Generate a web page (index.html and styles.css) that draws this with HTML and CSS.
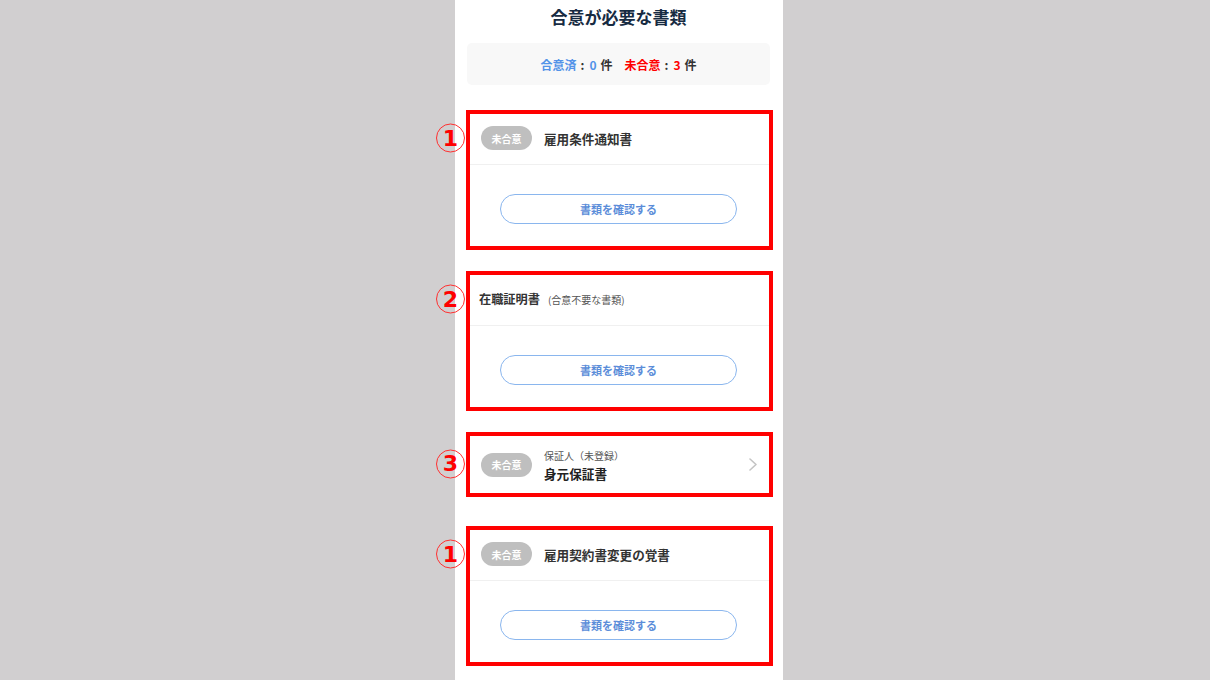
FILE: index.html
```html
<!DOCTYPE html>
<html lang="ja">
<head>
<meta charset="utf-8">
<title>合意が必要な書類</title>
<link rel="stylesheet" href="styles.css">
</head>
<body>
<div class="panel">
  <h1 class="page-title">合意が必要な書類</h1>
  <div class="summary">
    <span class="sum-item"><span class="ok">合意済</span><span class="colon">:</span><span class="ok count">0</span>件</span>
    <span class="sum-item"><span class="ng">未合意</span><span class="colon">:</span><span class="ng count">3</span>件</span>
  </div>

  <div class="card card-first">
    <div class="card-head">
      <span class="num">1</span>
      <span class="badge">未合意</span>
      <span class="doc-title">雇用条件通知書</span>
    </div>
    <div class="card-body">
      <button class="btn">書類を確認する</button>
    </div>
  </div>

  <div class="card">
    <div class="card-head card-head-plain">
      <span class="num">2</span>
      <span class="doc-title doc-title-tight">在職証明書</span>
      <span class="doc-note">(合意不要な書類)</span>
    </div>
    <div class="card-body">
      <button class="btn">書類を確認する</button>
    </div>
  </div>

  <div class="card">
    <div class="card-head card-head-row">
      <span class="num">3</span>
      <span class="badge">未合意</span>
      <div class="doc-stack">
        <span class="doc-sub">保証人（未登録）</span>
        <span class="doc-main">身元保証書</span>
      </div>
      <svg class="chev" width="8" height="13" viewBox="0 0 8 13"><polyline points="1,1 7,6.5 1,12" fill="none" stroke="#c4c4c4" stroke-width="1.6" stroke-linecap="round" stroke-linejoin="round"/></svg>
    </div>
  </div>

  <div class="card card-last">
    <div class="card-head">
      <span class="num">1</span>
      <span class="badge">未合意</span>
      <span class="doc-title">雇用契約書変更の覚書</span>
    </div>
    <div class="card-body">
      <button class="btn">書類を確認する</button>
    </div>
  </div>
</div>
</body>
</html>
```

FILE: styles.css
```css
html, body {
  margin: 0;
  padding: 0;
  background: #d1cfd0;
  height: 680px;
  overflow: hidden;
}

body {
  font-family: "Noto Sans CJK JP", "Noto Sans", sans-serif;
  color: #333;
}

.panel {
  margin-left: 455px;
  width: 328px;
  min-height: 680px;
  background: #ffffff;
  box-sizing: border-box;
  padding: 0 13px 0 12px;
}

.page-title {
  margin: 0;
  height: 34px;
  line-height: 34px;
  font-size: 17px;
  font-weight: 700;
  text-align: center;
  color: #172b42;
}

.summary {
  margin-top: 9px;
  height: 42px;
  background: #f8f8f8;
  border-radius: 5px;
  display: flex;
  align-items: center;
  justify-content: center;
  gap: 12px;
  font-size: 12px;
  font-weight: 700;
  color: #333;
}

.colon {
  margin: 0 5px 0 4px;
}

.count {
  margin-right: 4px;
}

.ok { color: #5393e8; }
.ng { color: #ff0000; }

.card {
  position: relative;
  margin: 21px -3px 0 -1px;
  border: 4px solid #ff0000;
  background: #fff;
}

.card-first { margin-top: 25px; }
.card-last { margin-top: 29px; }

.card-head {
  position: relative;
  height: 51px;
  box-sizing: border-box;
  padding: 0 11px 2px 11px;
  display: flex;
  align-items: center;
  border-bottom: 1px solid #f0f0f0;
}

.card-head-plain {
  padding-left: 9px;
}

.card-head-row {
  height: 57px;
  border-bottom: none;
  padding: 0 12px 0 11px;
}

.num {
  position: absolute;
  left: -34px;
  top: 50%;
  transform: translateY(calc(-50% - 1px));
  width: 27px;
  height: 27px;
  border: 1px solid #ff3030;
  border-radius: 50%;
  display: flex;
  align-items: center;
  justify-content: center;
  font-family: "DejaVu Sans", sans-serif;
  font-weight: 700;
  font-size: 22px;
  line-height: 1;
  color: #ff0000;
}

.badge {
  flex: none;
  width: 51px;
  height: 24px;
  border-radius: 12px;
  background: #bfbfbf;
  color: #fff;
  font-size: 10px;
  font-weight: 700;
  display: flex;
  align-items: center;
  justify-content: center;
  margin-right: 12px;
}

.doc-title {
  font-size: 12.6px;
  font-weight: 700;
  color: #333;
}

.doc-title-tight {
  font-size: 12.2px;
}

.doc-note {
  margin-left: 8px;
  font-size: 10px;
  color: #555;
}

.doc-stack {
  display: flex;
  flex-direction: column;
  flex: 1;
  margin-top: 2px;
}

.doc-sub {
  font-size: 10px;
  line-height: 16px;
  color: #555;
}

.doc-main {
  font-size: 12.6px;
  line-height: 20px;
  font-weight: 700;
  color: #222;
}

.chev {
  flex: none;
  display: block;
}

.card-body {
  padding: 29px 30px 22px 30px;
  display: flex;
}

.btn {
  width: 237px;
  height: 30px;
  border: 1px solid #8ab6ee;
  border-radius: 15px;
  background: #fff;
  color: #5b8dd9;
  font-family: "Noto Sans CJK JP", "Noto Sans", sans-serif;
  font-size: 11px;
  font-weight: 700;
  padding: 0;
  cursor: pointer;
}
```
